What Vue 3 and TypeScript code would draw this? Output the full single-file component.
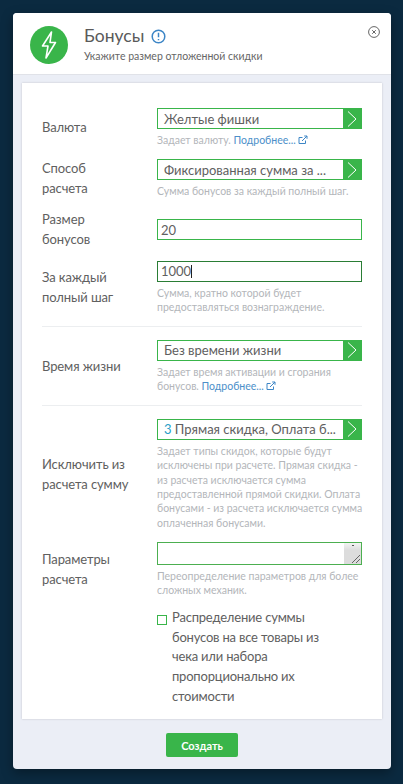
<script setup lang="ts">
interface SelectField {
  prefix?: string
  text: string
}

const currency: SelectField = { text: 'Желтые фишки' }
const method: SelectField = { text: 'Фиксированная сумма за ...' }
const lifetime: SelectField = { text: 'Без времени жизни' }
const exclude: SelectField = { prefix: '3', text: 'Прямая скидка, Оплата б...' }
</script>

<template>
  <div class="page">
    <div class="modal">
      <header class="modal-head">
        <div class="logo">
          <svg width="16" height="28" viewBox="0 0 16 28" fill="none" stroke="#fff" stroke-width="1.6" stroke-linejoin="round">
            <path d="M10.5 1 1.5 15H7L5 27 14.5 11.5H9L10.5 1z" />
          </svg>
        </div>
        <div class="head-text">
          <div class="title-line">
            <span class="title">Бонусы</span>
            <svg class="info" width="15" height="15" viewBox="0 0 15 15" fill="none">
              <circle cx="7.5" cy="7.5" r="6.3" stroke="#3d86c6" stroke-width="1.5" />
              <path d="M7.5 3.8v4.4M7.5 10v1.3" stroke="#3d86c6" stroke-width="1.5" />
            </svg>
          </div>
          <div class="subtitle">Укажите размер отложенной скидки</div>
        </div>
        <svg class="close" width="12" height="12" viewBox="0 0 12 12" fill="none" stroke="#555" stroke-width="0.9">
          <circle cx="6" cy="6" r="5.4" />
          <path d="M4.2 4.2l3.6 3.6M7.8 4.2L4.2 7.8" />
        </svg>
      </header>

      <div class="modal-body">
        <div class="card">
          <div class="row">
            <div class="label">Валюта</div>
            <div class="field">
              <div class="select">
                <span class="select-text">{{ currency.text }}</span>
                <span class="select-btn"><svg width="10" height="16" viewBox="0 0 10 16" fill="none" stroke="#fff" stroke-width="1"><path d="M1 .5 9 8l-8 7.5" /></svg></span>
              </div>
              <div class="help">
                Задает валюту. <a class="more">Подробнее...</a>
                <svg class="ext" width="10" height="10" viewBox="0 0 10 10" fill="none" stroke="#3d86c6" stroke-width="1"><path d="M7.5 5.5v3H1v-6h3.5M4 6l5-5M6.2 1H9v2.8" /></svg>
              </div>
            </div>
          </div>

          <div class="row">
            <div class="label">Способ<br />расчета</div>
            <div class="field">
              <div class="select">
                <span class="select-text">{{ method.text }}</span>
                <span class="select-btn"><svg width="10" height="16" viewBox="0 0 10 16" fill="none" stroke="#fff" stroke-width="1"><path d="M1 .5 9 8l-8 7.5" /></svg></span>
              </div>
              <div class="help">Сумма бонусов за каждый полный шаг.</div>
            </div>
          </div>

          <div class="row">
            <div class="label">Размер<br />бонусов</div>
            <div class="field">
              <input class="input" value="20" />
            </div>
          </div>

          <div class="row">
            <div class="label">За каждый<br />полный шаг</div>
            <div class="field">
              <div class="input-wrap">
                <input class="input focused" value="1000" />
                <span class="caret"></span>
              </div>
              <div class="help">Сумма, кратно которой будет<br />предоставляться вознаграждение.</div>
            </div>
          </div>

          <div class="divider"></div>

          <div class="row">
            <div class="label">Время жизни</div>
            <div class="field">
              <div class="select">
                <span class="select-text">{{ lifetime.text }}</span>
                <span class="select-btn"><svg width="10" height="16" viewBox="0 0 10 16" fill="none" stroke="#fff" stroke-width="1"><path d="M1 .5 9 8l-8 7.5" /></svg></span>
              </div>
              <div class="help">
                Задает время активации и сгорания<br />бонусов. <a class="more">Подробнее...</a>
                <svg class="ext" width="10" height="10" viewBox="0 0 10 10" fill="none" stroke="#3d86c6" stroke-width="1"><path d="M7.5 5.5v3H1v-6h3.5M4 6l5-5M6.2 1H9v2.8" /></svg>
              </div>
            </div>
          </div>

          <div class="divider"></div>

          <div class="row">
            <div class="label">Исключить из<br />расчета сумму</div>
            <div class="field">
              <div class="select">
                <span class="select-text"><span class="count">{{ exclude.prefix }}</span> {{ exclude.text }}</span>
                <span class="select-btn"><svg width="10" height="16" viewBox="0 0 10 16" fill="none" stroke="#fff" stroke-width="1"><path d="M1 .5 9 8l-8 7.5" /></svg></span>
              </div>
              <div class="help">
                Задает типы скидок, которые будут<br />
                исключены при расчете. Прямая скидка -<br />
                из расчета исключается сумма<br />
                предоставленной прямой скидки. Оплата<br />
                бонусами - из расчета исключается сумма<br />
                оплаченная бонусами.
              </div>
            </div>
          </div>

          <div class="row">
            <div class="label">Параметры<br />расчета</div>
            <div class="field">
              <div class="input-wrap">
                <textarea class="textarea"></textarea>
                <span class="scroll-part">
                  <svg width="17" height="21" viewBox="0 0 17 21" fill="none">
                    <path d="M8 2h2v1H8z" fill="#555" />
                    <path d="M8 20l8-8M12 20l4-4" stroke="#666" stroke-width="1" />
                  </svg>
                </span>
              </div>
              <div class="help">Переопределение параметров для более<br />сложных механик.</div>
            </div>
          </div>

          <label class="check-row">
            <span class="check"></span>
            <span class="check-text">Распределение суммы<br />бонусов на все товары из<br />чека или набора<br />пропорционально их<br />стоимости</span>
          </label>
        </div>

        <button class="submit" type="button">Создать</button>
      </div>
    </div>
  </div>
</template>

<style scoped>
.page {
  height: 784px;
  box-sizing: border-box;
  padding: 13px 12px 15px 13px;
  background: #0b2a40;
  font-family: Lato, Roboto, sans-serif;
  color: #555;
}

.modal {
  height: 756px;
  display: flex;
  flex-direction: column;
  border-radius: 4px;
  overflow: hidden;
  box-shadow: 0 4px 12px rgba(0, 0, 0, 0.35);
  background: #ebeef6;
}

.modal-head {
  position: relative;
  height: 61px;
  flex: none;
  display: flex;
  align-items: flex-start;
  background: #fff;
  border-bottom: 1px solid #e0e2e8;
}

.logo {
  width: 38px;
  height: 38px;
  margin: 13px 16px 0 17px;
  border-radius: 50%;
  background: #39b54a;
  display: flex;
  align-items: center;
  justify-content: center;
}

.head-text {
  padding-top: 9px;
}

.title-line {
  display: flex;
  align-items: center;
  gap: 7px;
  height: 26px;
}

.title {
  font-size: 17.5px;
  color: #5a5a5a;
}

.info {
  margin-top: 2px;
}

.subtitle {
  margin-top: 1px;
  font-size: 10.5px;
  line-height: 14px;
  color: #666;
}

.close {
  position: absolute;
  top: 13px;
  right: 11px;
}

.modal-body {
  flex: 1;
  display: flex;
  flex-direction: column;
  align-items: center;
  padding: 8px 9px 0;
}

.card {
  box-sizing: border-box;
  width: 100%;
  height: 636px;
  padding: 25px 20px 0;
  background: #fff;
  box-shadow: 0 0 2px rgba(0, 0, 0, 0.18);
}

.row {
  display: grid;
  grid-template-columns: 115px 205px;
  align-items: center;
  margin-bottom: 11.6px;
}

.label {
  font-size: 13px;
  line-height: 19.6px;
  letter-spacing: -0.1px;
  color: #606060;
}

.field {
  min-width: 0;
}

.select {
  display: flex;
  align-items: center;
  box-sizing: border-box;
  height: 21px;
  border: 1px solid #39b54a;
  background: #fff;
}

.select-text {
  flex: 1;
  min-width: 0;
  padding-left: 6px;
  font-size: 13px;
  white-space: nowrap;
  color: #606060;
}

.count {
  color: #2a9fc9;
}

.select-btn {
  flex: none;
  width: 18px;
  height: 19px;
  background: #39b54a;
  display: flex;
  align-items: center;
  justify-content: center;
}

.help {
  margin-top: 4px;
  font-size: 10.5px;
  line-height: 14.4px;
  color: #b3b6ba;
  white-space: nowrap;
}

.more {
  color: #4c8fc9;
}

.ext {
  display: inline-block;
  margin-left: 2px;
  vertical-align: top;
  margin-top: 2px;
}

.input-wrap {
  position: relative;
}

.input {
  display: block;
  box-sizing: border-box;
  width: 100%;
  height: 21px;
  padding: 0 3px;
  border: 1px solid #39b54a;
  border-radius: 0;
  outline: none;
  background: #fff;
  font-family: inherit;
  font-size: 13px;
  color: #606060;
}

.input.focused {
  border-color: #2a7d35;
}

.caret {
  position: absolute;
  left: 34px;
  top: 4px;
  width: 1px;
  height: 13px;
  background: #222;
}

.textarea {
  display: block;
  box-sizing: border-box;
  width: 100%;
  height: 23px;
  padding: 0 4px;
  border: 1px solid #4caf50;
  border-radius: 0;
  outline: none;
  resize: none;
  background: #fff;
}

.scroll-part {
  position: absolute;
  top: 1px;
  right: 1px;
  width: 17px;
  height: 21px;
  background: linear-gradient(#f3f3f3, #dcdcdc 35%);
}

.scroll-part svg {
  display: block;
}

.divider {
  height: 1px;
  margin: 0 0 12.6px;
  background: #eceef0;
}

.check-row {
  display: flex;
  align-items: flex-start;
  margin: -1px 0 0 115px;
}

.check {
  flex: none;
  box-sizing: border-box;
  width: 10px;
  height: 10px;
  margin: 7px 5px 0 0;
  border: 1px solid #39b54a;
}

.check-text {
  font-size: 13px;
  line-height: 19.6px;
  letter-spacing: -0.2px;
  color: #606060;
}

.submit {
  width: 72px;
  height: 24px;
  margin-top: 14px;
  border: 0;
  border-radius: 2px;
  background: #39b54a;
  color: #fff;
  font-family: inherit;
  font-size: 11px;
  font-weight: 700;
}
</style>

<style>
body {
  background: #0b2a40;
}
</style>
